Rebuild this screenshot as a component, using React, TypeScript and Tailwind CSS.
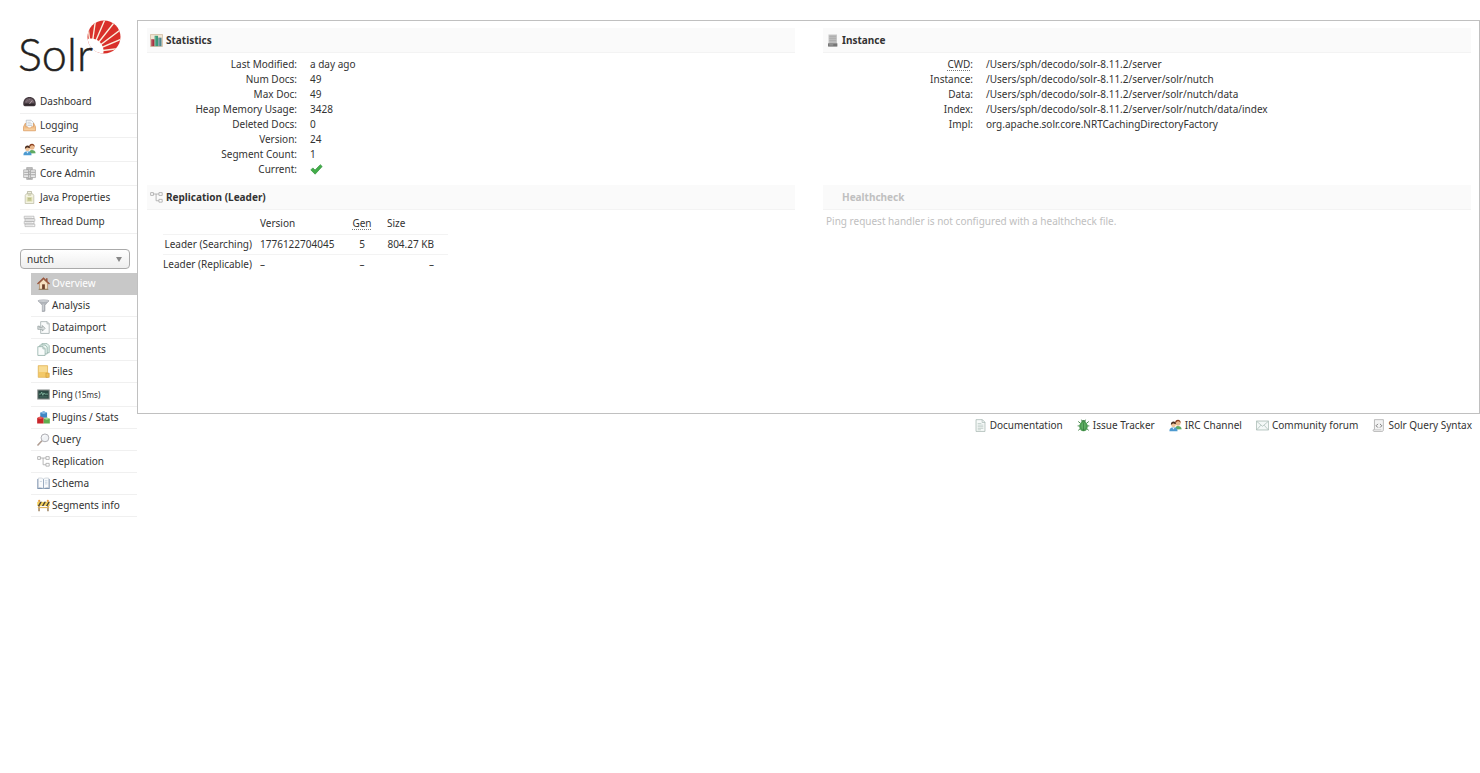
import React, { useState } from 'react';
import clsx from 'clsx';

type IconName =
  | 'dashboard' | 'logging' | 'security' | 'cores' | 'java' | 'threads'
  | 'home' | 'funnel' | 'import' | 'documents' | 'folder' | 'ping'
  | 'plugins' | 'query' | 'replication' | 'schema' | 'segments'
  | 'chart' | 'server' | 'doc' | 'bug' | 'mail' | 'script';

const ICONS: Record<IconName, React.ReactNode> = {
  dashboard: (
    <>
      <path d="M.3 11C.3 5.500 3.600 2.500 8 2.500s7.700 3 7.700 8.500c0 1.600-.8 2.700-2 2.700H2.300c-1.200 0-2-1.100-2-2.700z" fill="#453a40" />
      <path d="M2 9.500C2.400 6 4.800 4 8 4s5.600 2 6 5.500z" fill="#6f5f67" />
      <path d="M8 11l3.500-4.500" stroke="#c9b5ba" strokeWidth=".9" />
      <path d="M3.500 8.500h1M5 6l.7.7M8 4.800v1M11.800 8.500h1" stroke="#a3959a" strokeWidth=".8" />
      <path d="M2 12h12" stroke="#2d262a" strokeWidth="1.600" />
    </>
  ),
  logging: (
    <>
      <path d="M4 1.500h6l3 3V12H4z" fill="#fafbfc" stroke="#a9b4bd" strokeWidth=".8" />
      <path d="M5.500 4h4M5.500 6h6M5.500 8h6" stroke="#b9c6cf" strokeWidth=".9" />
      <path d="M.6 9.500L3 5v4.500h2.500L6.500 11h3l1-1.500H13V5l2.400 4.500v5H.6z" fill="#f2c08a" stroke="#d8985a" strokeWidth=".8" />
      <path d="M1.500 12.500h13" stroke="#f9d9ae" strokeWidth="1.200" />
    </>
  ),
  security: (
    <>
      <circle cx="11" cy="5" r="3.200" fill="#e9b88d" />
      <path d="M7.500 5c0-3 1.600-4.200 3.600-4.200S14.600 2.300 14.500 5c-1-1.800-3-2.300-4.500-2-.8 1-1.600 1.500-2.500 2z" fill="#8a3f1d" />
      <path d="M7.500 13c0-3.200 1.300-4.500 3.500-4.500s4.500 1 4.500 4z" fill="#5faa62" />
      <circle cx="5.500" cy="7.200" r="2.900" fill="#f0c49b" />
      <path d="M2.300 7c0-2.700 1.300-4 3.300-4s3.100 1.500 3 3.500C7 6.300 5.500 5.800 5 5.300 4.300 6.300 3.300 6.800 2.300 7z" fill="#4a2d1e" />
      <path d="M.5 15c0-3.300 2-4.700 5-4.700s5 1.400 5 4.700z" fill="#4d9ad0" />
      <path d="M4 10.500l1.500 2.300L7 10.500z" fill="#eaf3fa" />
    </>
  ),
  cores: (
    <>
      <path d="M4.500.7h7v14.600h-7z" fill="#d6d6d6" stroke="#999" strokeWidth=".8" />
      <path d="M.8 3.500h6v9.500h-6zM9.300 3.500h6v9.500h-6z" fill="#e8e8e8" stroke="#999" strokeWidth=".8" />
      <path d="M1.500 6.500h5M1.500 9.500h5M10 6.500h5M10 9.500h5M5 2.500h6M7 6h2M7 9h2M5.500 14h5" stroke="#909090" strokeWidth=".9" />
    </>
  ),
  java: (
    <>
      <path d="M5.500.6h5v3h-5z" fill="#efefdf" stroke="#a5a58d" strokeWidth=".8" />
      <path d="M4 3.500h8l1.300 2v9.900H2.700V5.500z" fill="#f4f3e2" stroke="#b3b39b" strokeWidth=".8" />
      <path d="M4.500 7.500h7V13h-7z" fill="#dcddae" />
      <path d="M6 9h4M6 11h4" stroke="#a3a772" strokeWidth=".9" />
      <path d="M6 5h4" stroke="#b6b78f" strokeWidth="1" />
    </>
  ),
  threads: (
    <>
      <path d="M1.500 1.500h12v3h-12zM2.500 4.700h12v3h-12zM1.500 7.900h12v3h-12zM2.500 11.100h12v3.200h-12z" fill="#f6f6f6" stroke="#acacac" strokeWidth=".8" />
      <path d="M3 3h8M4 6.200h8M3 9.400h8M4 12.700h8" stroke="#dadada" strokeWidth=".8" />
    </>
  ),
  home: (
    <>
      <path d="M11 1.500h2V5h-2z" fill="#9a5a42" />
      <path d="M3 7.500L8 3l5 4.500V15H3z" fill="#f6e0c0" stroke="#a57b55" strokeWidth=".8" />
      <path d="M.6 8.600L8 1.400l7.400 7.200" fill="none" stroke="#98543a" strokeWidth="1.700" />
      <path d="M6.300 9h3.400v6H6.300z" fill="#6d4028" />
      <path d="M2 15.300h12" stroke="#8b7a5c" strokeWidth="1" />
    </>
  ),
  funnel: (
    <>
      <path d="M1.500 2h13L9.800 7.800V15l-3.300.7V7.800z" fill="#b3b7bc" stroke="#93979d" strokeWidth=".7" />
      <ellipse cx="8" cy="2.500" rx="6.500" ry="1.500" fill="#d4d7db" stroke="#9a9ea4" strokeWidth=".7" />
      <path d="M7.700 6.500V14" stroke="#dfe2e5" strokeWidth="1" />
    </>
  ),
  import: (
    <>
      <path d="M4.500.8h8L15 3.300v12H4.500z" fill="#fafbfb" stroke="#9aa5a5" strokeWidth=".9" />
      <path d="M12.300.8v2.700H15" fill="none" stroke="#9aa5a5" strokeWidth=".8" />
      <path d="M1 6.300v4h5.500v2.200L10 9 6.500 5.500v2.300H3V6.300z" fill="#d9dddd" stroke="#8c9797" strokeWidth=".8" />
    </>
  ),
  documents: (
    <>
      <path d="M6 .8h6.500L15 3.300V12H6z" fill="#e2f1ec" stroke="#86a79d" strokeWidth=".9" />
      <path d="M3.500 2.500H10L12.500 5v8.500h-9z" fill="#edf7f3" stroke="#86a79d" strokeWidth=".9" />
      <path d="M1 4.500h6.500L10 7v8.300H1z" fill="#f9fcfb" stroke="#86a79d" strokeWidth=".9" />
      <path d="M7.300 4.700v2.500h2.500" fill="none" stroke="#86a79d" strokeWidth=".8" />
    </>
  ),
  folder: (
    <>
      <path d="M1.500.8h11.500v14.400H1.500z" fill="#f3c968" stroke="#dbab4f" strokeWidth=".8" />
      <path d="M2.300 1.600h10v7h-10z" fill="#f8dc94" />
      <path d="M11 10h4v5.200h-4z" fill="#efbf55" stroke="#cf9a3a" strokeWidth=".8" />
    </>
  ),
  ping: (
    <>
      <path d="M.3 1.800h15.400v12.400H.3z" fill="#858b89" />
      <path d="M1.600 3.100h12.800v9.800H1.600z" fill="#2a4842" />
      <path d="M2.500 7.500h2L5.800 5l1.400 4L8.500 6l1 1.500h4" fill="none" stroke="#8fc5ad" strokeWidth=".9" />
      <path d="M3 11h10" stroke="#5f8579" strokeWidth=".8" />
    </>
  ),
  plugins: (
    <>
      <path d="M4 2.200L8.200.3l4.200 1.900v6H4z" fill="#3f87c5" />
      <path d="M4 2.200l4.200 1.500 4.200-1.500L8.200.3z" fill="#86b9e3" />
      <path d="M.2 8.500l4-1.700 4 1.700v7h-8z" fill="#c9252b" />
      <path d="M.2 8.500l4 1.400 4-1.400-4-1.700z" fill="#e8605c" />
      <path d="M8.200 9.500l3.800-1.500 3.800 1.500v6H8.200z" fill="#5fae4e" />
      <path d="M8.200 9.500l3.800 1.200 3.800-1.200L12 8z" fill="#a9dc94" />
    </>
  ),
  query: (
    <>
      <path d="M5.800 9.800l-4.600 5" stroke="#b09d92" strokeWidth="2" strokeLinecap="round" />
      <circle cx="9.800" cy="6" r="4.800" fill="#f0f2f5" stroke="#aeaeb3" strokeWidth="1.200" />
      <path d="M7 5.500C7.500 3.900 8.800 3 10.300 3" fill="none" stroke="#fff" strokeWidth="1.200" />
    </>
  ),
  replication: (
    <>
      <path d="M4 3.700h7M7.500 3.700V12H11" fill="none" stroke="#a8a8a8" strokeWidth="1" />
      <path d="M.8 2h3.400v3.400H.8zM11 2h4v3.400h-4zM11 10.300h4v3.400h-4z" fill="#fff" stroke="#a8a8a8" strokeWidth="1" />
    </>
  ),
  schema: (
    <>
      <path d="M.4 2.500h15.200v12.300H.4z" fill="#7890ae" />
      <path d="M1.500 1.500c2.500-.6 5-.3 6.500.9 1.500-1.200 4-1.500 6.500-.9v12c-2.500-.5-5-.2-6.500.8-1.500-1-4-1.300-6.500-.8z" fill="#f8fafc" stroke="#aab4c0" strokeWidth=".6" />
      <path d="M8 2.700V14" stroke="#8499b2" strokeWidth="1" />
      <path d="M9.800 4.500h3M9.800 6.500h3M9.800 8.500h3M3.500 5.500h2.500" stroke="#bccada" strokeWidth=".9" />
    </>
  ),
  segments: (
    <>
      <path d="M2.500 3v12M13.500 3v12" stroke="#8f6f45" strokeWidth="1.600" />
      <path d="M.3 3.500h15.400v5H.3z" fill="#f4d05a" />
      <path d="M1 8.500l3-5h2l-3 5zM6 8.500l3-5h2l-3 5zM11 8.500l3-5h1.500v.5L13 8.500z" fill="#4c4338" />
      <path d="M1 10.500h14" stroke="#e0b35c" strokeWidth="1.500" />
      <circle cx="2.700" cy="2.300" r="1.300" fill="#ee9a35" />
      <circle cx="13.300" cy="2.300" r="1.300" fill="#ee9a35" />
    </>
  ),
  chart: (
    <>
      <path d="M.5.700h15v14.600H.5z" fill="#f2e6d6" stroke="#cdb798" strokeWidth=".9" />
      <path d="M1.500 6.500h4V15h-4z" fill="#a8303f" />
      <path d="M5.700 2.200h4.200V15H5.700z" fill="#3a9a78" />
      <path d="M10.200 4.500h4V15h-4z" fill="#52868f" />
      <path d="M2.500 7v8M6.900 3v12M11.300 5v10" stroke="#fff" strokeOpacity=".3" strokeWidth=".9" />
    </>
  ),
  server: (
    <>
      <path d="M3 .6h10.500v14.800H3z" fill="#c9c9c9" />
      <path d="M4 1.500h8.500v9.500H4z" fill="#bcbcbc" />
      <path d="M4 3h8.500M4 5.500h8.500M4 8h8.500" stroke="#a8a8a8" strokeWidth=".8" />
      <path d="M2.500 11.500h11.500v3.900H2.500z" fill="#757575" />
      <path d="M4 13.400h5" stroke="#b5b5b5" strokeWidth=".9" />
    </>
  ),
  doc: (
    <>
      <path d="M2.500.8h7.800l3.200 3.200v11.300h-11z" fill="#f7faf9" stroke="#a3b3ae" strokeWidth=".9" />
      <path d="M10 .8v3.500h3.500" fill="none" stroke="#a3b3ae" strokeWidth=".8" />
      <path d="M4.500 5.500h4.500M4.500 7.500h7M4.500 9.500h7M4.500 11.500h7M4.500 13.300h4" stroke="#b3c4be" strokeWidth=".9" />
    </>
  ),
  bug: (
    <>
      <path d="M1.500 3l3 2.500M14.500 3l-3 2.500M.8 8.500h14.400M1.500 14l3-2.500M14.500 14l-3-2.500M5.500.8l1 2M10.500.8l-1 2" stroke="#4a8a50" strokeWidth="1.200" />
      <circle cx="8" cy="3.800" r="2.700" fill="#3f8547" />
      <ellipse cx="8" cy="9.200" rx="5.200" ry="6" fill="#4b9a51" />
      <ellipse cx="8" cy="8.500" rx="2.800" ry="3.800" fill="#5fae63" />
      <path d="M8 5v9.500" stroke="#33733b" strokeWidth=".8" />
    </>
  ),
  mail: (
    <>
      <path d="M.5 2.500h15v11H.5z" fill="#f4f8f7" stroke="#9fb2ac" strokeWidth=".9" />
      <path d="M1 3l7 6 7-6M1 13.200l5-5.600M15 13.200l-5-5.600" fill="none" stroke="#a9bbb5" strokeWidth=".9" />
    </>
  ),
  script: (
    <>
      <path d="M3 .8h11v12.500c0 1.200-.6 2-1.800 2H2.500c-.8 0-1.300-.8-1-2H3z" fill="#f3f3f3" stroke="#a5a5a5" strokeWidth=".9" />
      <path d="M7.300 6L5 8.300l2.300 2.300M9.800 6l2.300 2.300-2.300 2.300" fill="none" stroke="#777" strokeWidth="1.200" />
      <path d="M3.500 13.300h8" stroke="#b5b5b5" strokeWidth=".8" />
    </>
  ),
};

function Icon({ name }: { name: IconName }) {
  return (
    <svg viewBox="0 0 16 16" className="w-[13px] h-[13px] shrink-0" aria-hidden="true">
      {ICONS[name]}
    </svg>
  );
}

const MAIN_MENU: { label: string; icon: IconName }[] = [
  { label: 'Dashboard', icon: 'dashboard' },
  { label: 'Logging', icon: 'logging' },
  { label: 'Security', icon: 'security' },
  { label: 'Core Admin', icon: 'cores' },
  { label: 'Java Properties', icon: 'java' },
  { label: 'Thread Dump', icon: 'threads' },
];

const CORE_MENU: { label: string; icon: IconName; note?: string }[] = [
  { label: 'Overview', icon: 'home' },
  { label: 'Analysis', icon: 'funnel' },
  { label: 'Dataimport', icon: 'import' },
  { label: 'Documents', icon: 'documents' },
  { label: 'Files', icon: 'folder' },
  { label: 'Ping', icon: 'ping', note: '(15ms)' },
  { label: 'Plugins / Stats', icon: 'plugins' },
  { label: 'Query', icon: 'query' },
  { label: 'Replication', icon: 'replication' },
  { label: 'Schema', icon: 'schema' },
  { label: 'Segments info', icon: 'segments' },
];

const FOOTER_LINKS: { label: string; icon: IconName }[] = [
  { label: 'Documentation', icon: 'doc' },
  { label: 'Issue Tracker', icon: 'bug' },
  { label: 'IRC Channel', icon: 'security' },
  { label: 'Community forum', icon: 'mail' },
  { label: 'Solr Query Syntax', icon: 'script' },
];

const STATS: [string, React.ReactNode][] = [
  ['Last Modified', 'a day ago'],
  ['Num Docs', '49'],
  ['Max Doc', '49'],
  ['Heap Memory Usage', '3428'],
  ['Deleted Docs', '0'],
  ['Version', '24'],
  ['Segment Count', '1'],
  ['Current', <Tick key="tick" />],
];

const INSTANCE: [React.ReactNode, string][] = [
  [<Abbr key="cwd" title="Current Working Directory">CWD</Abbr>, '/Users/sph/decodo/solr-8.11.2/server'],
  ['Instance', '/Users/sph/decodo/solr-8.11.2/server/solr/nutch'],
  ['Data', '/Users/sph/decodo/solr-8.11.2/server/solr/nutch/data'],
  ['Index', '/Users/sph/decodo/solr-8.11.2/server/solr/nutch/data/index'],
  ['Impl', 'org.apache.solr.core.NRTCachingDirectoryFactory'],
];

function Tick() {
  return (
    <svg viewBox="0 0 16 16" className="w-[13px] h-[13px]" role="img" aria-label="yes">
      <path d="M1 8.500L3.500 6l2.700 2.700L12.700 2 15 4.300 6.300 13.800z" fill="#43ad49" stroke="#2f8f3a" strokeWidth=".8" />
    </svg>
  );
}

function Abbr({ title, children }: { title: string; children: React.ReactNode }) {
  return <abbr title={title} className="underline decoration-dotted decoration-[#777] underline-offset-2">{children}</abbr>;
}

function Logo() {
  return (
    <a href="#/" aria-label="Apache Solr" className="block -ml-1">
      <svg viewBox="-4 0 106 56" className="w-[106px] h-[56px] overflow-visible" aria-hidden="true">
        <defs>
          <clipPath id="sun">
            <circle cx="84" cy="17" r="16.500" />
          </clipPath>
        </defs>
        <g clipPath="url(#sun)">
          <path d="M66 0h36v34H66z" fill="#d9302a" />
          <path
            d="M71 32L67 -2M71 32L76 -3M71 32L86 -3M71 32L97 -1M71 32L104 7M71 32L104 18M71 32L103 28"
            stroke="#fbeedd"
            strokeWidth="1.400"
          />
          <circle cx="71" cy="31" r="12.500" fill="#fff" />
        </g>
        <text
          x="-2"
          y="51"
          fontSize="45"
          fill="#231f20"
          stroke="#231f20"
          strokeWidth=".5"
          className="font-['Lato',sans-serif] font-light"
        >
          Solr
        </text>
      </svg>
    </a>
  );
}

function Block({ title, icon, disabled, children }: { title: string; icon?: IconName; disabled?: boolean; children: React.ReactNode }) {
  return (
    <section className={clsx('min-w-0', disabled && 'text-[#c0c0c0]')}>
      <h2 className="flex items-center gap-[3px] h-[25px] px-[3px] bg-[#fafafa] border-b border-[#f3f3f3] font-bold">
        {icon ? <Icon name={icon} /> : <span className="w-[13px]" />}
        {title}
      </h2>
      {children}
    </section>
  );
}

function DefinitionList({ rows }: { rows: [React.ReactNode, React.ReactNode][] }) {
  return (
    <dl className="pt-1">
      {rows.map(([label, value], i) => (
        <div key={i} className="flex gap-[13px] leading-[15px]">
          <dt className="w-[150px] shrink-0 text-right">{label}:</dt>
          <dd className="flex items-center min-w-0">{value}</dd>
        </div>
      ))}
    </dl>
  );
}

function ReplicationTable() {
  return (
    <table className="mt-1 ml-4 w-[285px] border-collapse">
      <thead>
        <tr className="h-5 border-b border-[#f3f3f3]">
          <td className="w-[93px]" />
          <th className="w-[90px] font-normal text-left pl-1">Version</th>
          <th className="w-[32px] font-normal text-center"><Abbr title="Generation">Gen</Abbr></th>
          <th className="font-normal text-left pl-[9px]">Size</th>
        </tr>
      </thead>
      <tbody>
        <tr className="h-5 border-b border-[#f3f3f3]">
          <th className="font-normal text-right whitespace-nowrap pr-1">Leader (Searching)</th>
          <td className="pl-1">1776122704045</td>
          <td className="text-center">5</td>
          <td className="text-right pr-[14px]">804.27 KB</td>
        </tr>
        <tr className="h-5">
          <th className="font-normal text-right whitespace-nowrap pr-1">Leader (Replicable)</th>
          <td className="pl-1">–</td>
          <td className="text-center">–</td>
          <td className="text-right pr-[14px]">–</td>
        </tr>
      </tbody>
    </table>
  );
}

function Sidebar() {
  const [active, setActive] = useState('Overview');

  return (
    <aside className="w-[137px] shrink-0 pl-5">
      <Logo />
      <nav className="mt-[14px]">
        {MAIN_MENU.map((item) => (
          <a key={item.label} href="#/" className="flex items-center gap-1 h-6 pl-[3px] border-b border-[#f0f0f0]">
            <Icon name={item.icon} />
            {item.label}
          </a>
        ))}
      </nav>

      <div className="relative mt-[15px] mr-[7px]">
        <select
          aria-label="Core Selector"
          defaultValue="nutch"
          className="block w-full h-5 pl-1.5 appearance-none rounded-[4px] border border-[#aaa] bg-linear-to-b from-white to-[#eee]"
        >
          <option>nutch</option>
        </select>
        <svg viewBox="0 0 6 5" className="absolute right-2 top-2 w-[6px] h-[5px] pointer-events-none" aria-hidden="true">
          <path d="M0 0h6L3 5z" fill="#888" />
        </svg>
      </div>

      <nav className="mt-1 ml-[11px]">
        {CORE_MENU.map((item) => (
          <a
            key={item.label}
            href="#/nutch"
            onClick={() => setActive(item.label)}
            className={clsx(
              'flex items-center gap-0.5 pl-1.5 border-b',
              item.note ? 'h-6' : 'h-[22px]',
              active === item.label ? 'bg-[#c8c8c8] border-[#c8c8c8] text-white' : 'border-[#f0f0f0]'
            )}
          >
            <Icon name={item.icon} />
            <span>
              {item.label}
              {item.note && <span className="text-[8px]"> {item.note}</span>}
            </span>
          </a>
        ))}
      </nav>
    </aside>
  );
}

export default function App() {
  return (
    <div className="flex items-start pt-5 bg-white text-[#333] text-[10px] font-['Noto_Sans','Open_Sans',sans-serif]">
      <Sidebar />
      <div className="flex-1 min-w-0">
        <main className="min-h-[394px] border border-[#c0c0c0] pl-[9px] pr-2 pt-[7px] grid grid-cols-2 content-start gap-x-7 gap-y-2">
          <Block title="Statistics" icon="chart">
            <DefinitionList rows={STATS} />
          </Block>
          <Block title="Instance" icon="server">
            <DefinitionList rows={INSTANCE} />
          </Block>
          <Block title="Replication (Leader)" icon="replication">
            <ReplicationTable />
          </Block>
          <Block title="Healthcheck" disabled>
            <p className="pt-1 px-[3px] leading-[15px]">Ping request handler is not configured with a healthcheck file.</p>
          </Block>
        </main>
        <footer className="flex justify-end gap-3.5 pt-1 pr-2">
          {FOOTER_LINKS.map((link) => (
            <a key={link.label} href="#/" className="flex items-center gap-[3px]">
              <Icon name={link.icon} />
              {link.label}
            </a>
          ))}
        </footer>
      </div>
    </div>
  );
}
